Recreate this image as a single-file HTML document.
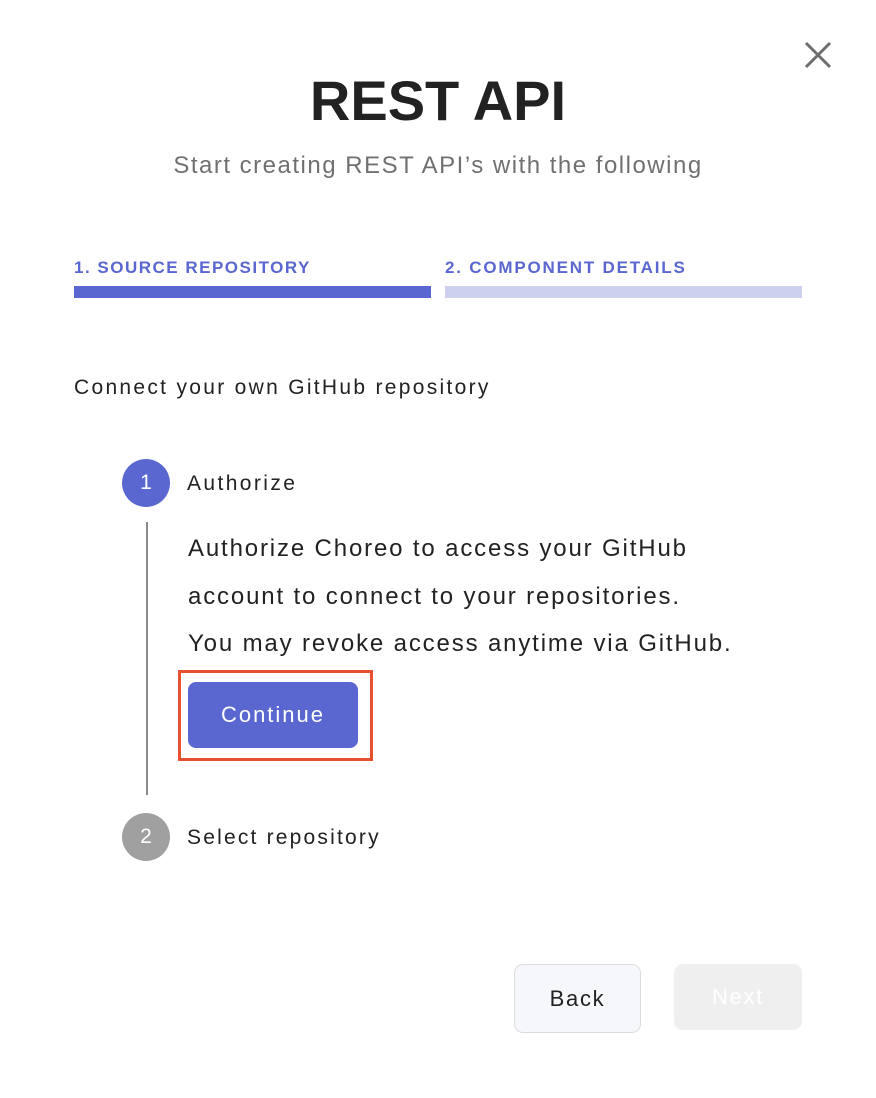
<!DOCTYPE html>
<html><head><meta charset="utf-8"><style>
html,body{margin:0;padding:0;width:876px;height:1098px;background:#fff;overflow:hidden;font-family:"Liberation Sans",sans-serif;color:#222}
.a{position:absolute;white-space:nowrap}
</style></head><body>
<svg class="a" style="left:803px;top:40px" width="30" height="30" viewBox="0 0 30 30"><path d="M3 3L27 27M27 3L3 27" stroke="#6e6e6e" stroke-width="3" fill="none"/></svg>
<div class="a" style="left:0;width:876px;text-align:center;top:68px;font-size:56px;font-weight:bold;color:#222">REST API</div>
<div class="a" style="left:0;width:876px;text-align:center;top:152px;font-size:24px;color:#707070;letter-spacing:1.5px">Start creating REST API’s with the following</div>
<div class="a" style="left:74px;top:258px;font-size:17px;font-weight:bold;color:#5a67d0;letter-spacing:1.5px">1. SOURCE REPOSITORY</div>
<div class="a" style="left:445px;top:258px;font-size:17px;font-weight:bold;color:#5a67d0;letter-spacing:1.8px">2. COMPONENT DETAILS</div>
<div class="a" style="left:74px;top:286px;width:357px;height:12px;background:#5a67d0"></div>
<div class="a" style="left:445px;top:286px;width:357px;height:12px;background:#cdd0ee"></div>
<div class="a" style="left:74px;top:376px;font-size:21px;color:#222;letter-spacing:2.3px">Connect your own GitHub repository</div>
<div class="a" style="left:122px;top:459px;width:48px;height:48px;border-radius:50%;background:#5a67d0;color:#fff;font-size:21px;line-height:48px;text-align:center">1</div>
<div class="a" style="left:187px;top:472px;font-size:21px;color:#222;letter-spacing:2.4px">Authorize</div>
<div class="a" style="left:146px;top:522px;width:2px;height:273px;background:#8a8a8a"></div>
<div class="a" style="left:188px;top:525px;font-size:24px;line-height:47.5px;color:#222;letter-spacing:1.85px">Authorize Choreo to access your GitHub<br>account to connect to your repositories.<br>You may revoke access anytime via GitHub.</div>
<div class="a" style="left:178px;top:670px;width:189px;height:85px;border:3px solid #e8502f"></div>
<div class="a" style="left:188px;top:682px;width:170px;height:66px;border-radius:8px;background:#5a67d0;color:#fff;font-size:22px;line-height:66px;text-align:center;letter-spacing:2px">Continue</div>
<div class="a" style="left:122px;top:813px;width:48px;height:48px;border-radius:50%;background:#a0a0a0;color:#fff;font-size:21px;line-height:48px;text-align:center">2</div>
<div class="a" style="left:187px;top:826px;font-size:21px;color:#222;letter-spacing:2.2px">Select repository</div>
<div class="a" style="left:514px;top:964px;width:125px;height:67px;border:1.5px solid #dcdcdc;border-radius:9px;background:#f6f7fa;color:#222;font-size:22px;line-height:67px;text-align:center;letter-spacing:1.7px">Back</div>
<div class="a" style="left:674px;top:964px;width:128px;height:66px;border-radius:9px;background:#efefef;color:#fff;font-size:22px;line-height:66px;text-align:center;letter-spacing:1.7px">Next</div>
</body></html>
